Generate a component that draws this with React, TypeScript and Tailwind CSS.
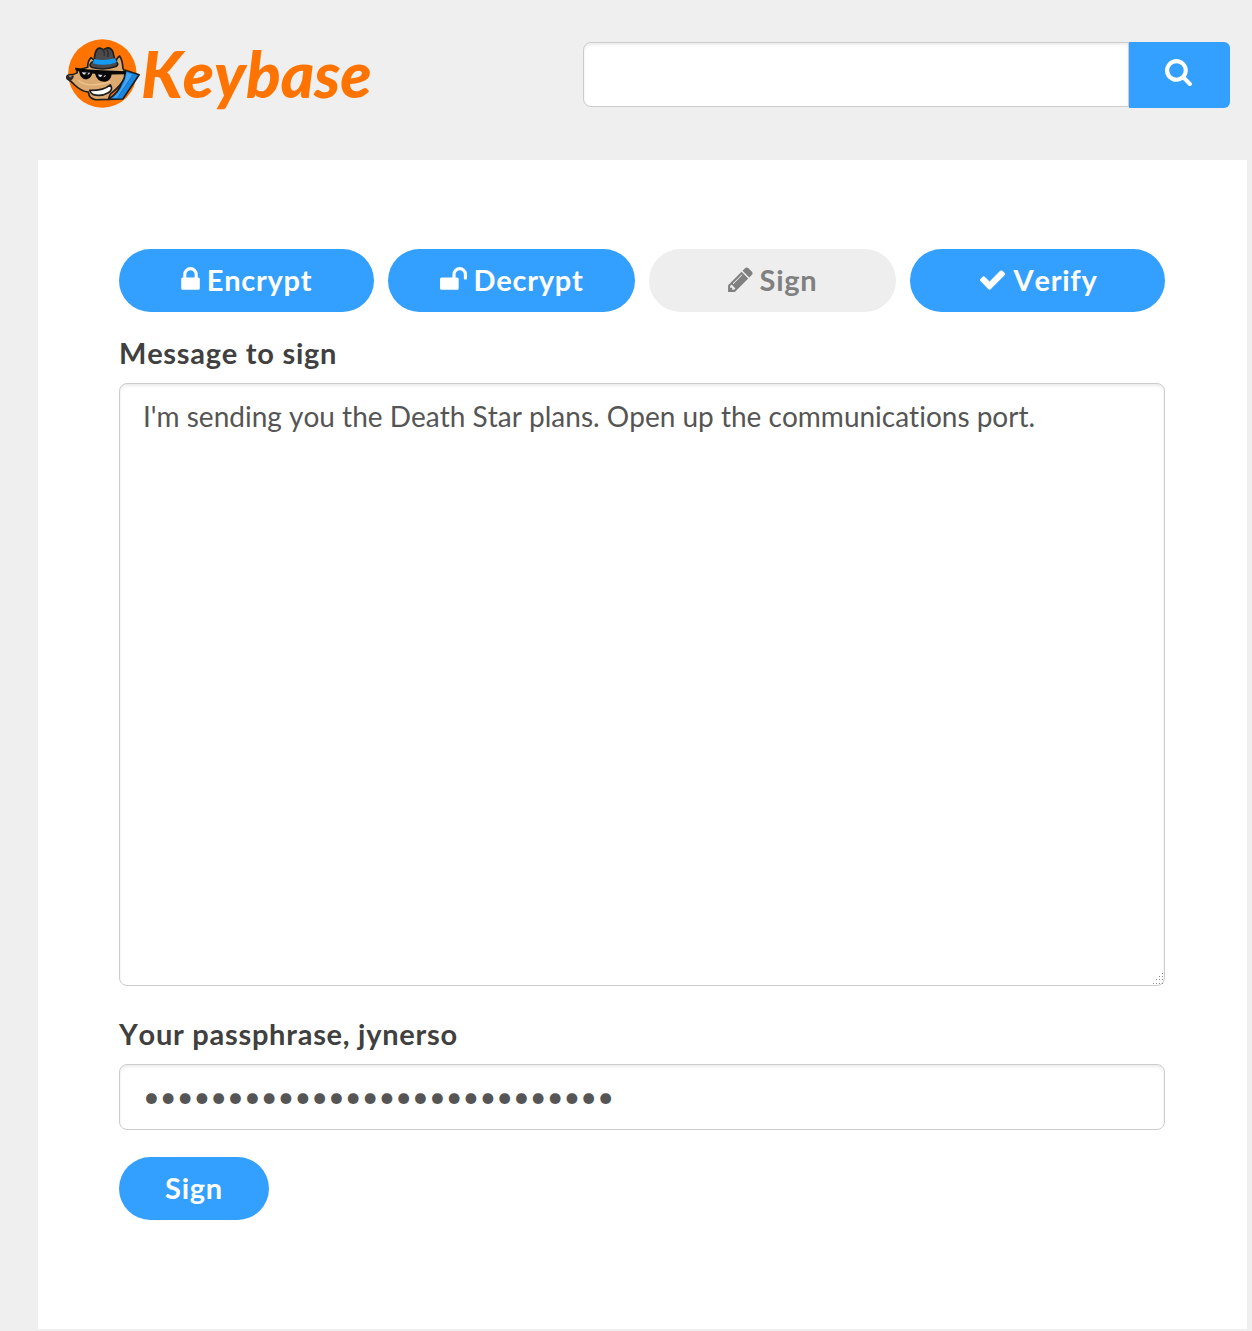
import React, { useState } from 'react';

const ICONS = {
  search:
    'M1216 832q0-185-131.5-316.5T768 384 451.5 515.5 320 832t131.5 316.5T768 1280t316.5-131.5T1216 832zm512 832q0 52-38 90t-90 38q-54 0-90-38l-343-342q-179 124-399 124-143 0-273.5-55.5t-225-150-150-225T64 832t55.5-273.5 150-225 225-150T768 128t273.5 55.5 225 150 150 225T1472 832q0 220-124 399l343 343q37 37 37 90z',
  lock: 'M640 768h512V576q0-106-75-181t-181-75-181 75-75 181v192zm832 96v576q0 40-28 68t-68 28H416q-40 0-68-28t-28-68V864q0-40 28-68t68-28h32V576q0-184 132-316t316-132 316 132 132 316v192h32q40 0 68 28t28 68z',
  unlock:
    'M1728 576v256q0 26-19 45t-45 19h-64q-26 0-45-19t-19-45V576q0-106-75-181t-181-75-181 75-75 181v192h96q40 0 68 28t28 68v576q0 40-28 68t-68 28H160q-40 0-68-28t-28-68V864q0-40 28-68t68-28h672V576q0-185 131.5-316.5T1280 128t316.5 131.5T1728 576z',
  pencil:
    'M491 1536l91-91-235-235-91 91v107h128v128h107zm523-928q0-22-22-22-10 0-17 7l-542 542q-7 7-7 17 0 22 22 22 10 0 17-7l542-542q7-7 7-17zm-54-192l416 416-832 832H128v-416zm683 96q0 53-37 90l-166 166-416-416 166-165q36-38 90-38 53 0 91 38l235 234q37 39 37 91z',
  check:
    'M1671 566q0 40-28 68l-724 724-136 136q-28 28-68 28t-68-28l-136-136-362-362q-28-28-28-68t28-68l136-136q28-28 68-28t68 28l294 295 656-657q28-28 68-28t68 28l136 136q28 28 28 68z',
};

type IconName = keyof typeof ICONS;

function Icon({ name, box = '0 0 1792 1792', className }: { name: IconName; box?: string; className: string }) {
  return (
    <svg viewBox={box} className={className} fill="currentColor" aria-hidden="true">
      <path d={ICONS[name]} />
    </svg>
  );
}

function Mascot() {
  return (
    <svg viewBox="30 28 228 208" className="h-[69px] w-[76px] shrink-0" aria-hidden="true">
      <circle cx="142" cy="132" r="103" fill="#ff7300" />
      <g stroke="#1d1d1d" strokeWidth="5" strokeLinejoin="round" strokeLinecap="round">
        <path d="M212 122 L253 136 L204 209 L160 210 Q192 190 200 160 Z" fill="#1787e4" />
        <path
          d="M66 122 L98 113 Q97 94 108 84 Q120 92 124 104 L182 100 Q184 86 194 79 Q203 92 204 116 Q213 128 208 146 Q200 168 166 194 L160 210 L122 211 Q102 208 100 188 Q78 186 58 166 Q48 155 36 148 Q32 138 42 136 Q56 136 66 130 Z"
          fill="#dcaa70"
        />
      </g>
      <path d="M216 129 L234 136 L188 204 L174 206 Q204 176 212 146Z" fill="#45a5f5" />
      <path d="M234 136 L188 204" stroke="#0d62b0" strokeWidth="2" />
      <path d="M34 141 Q40 134 56 138 Q56 149 46 153 Q34 150 34 141Z" fill="#302624" />
      <path d="M40 139 Q46 136 52 139 L45 144Z" fill="#a58b82" />
      <path d="M70 153 Q88 168 118 166 Q148 164 166 156" fill="none" stroke="#edc38f" strokeWidth="4" />
      <path
        d="M104 183 Q145 184 166 166 Q176 181 160 190 Q137 203 113 195 Q106 191 104 183Z"
        fill="#ffffff"
        stroke="#1d1d1d"
        strokeWidth="5"
        strokeLinejoin="round"
      />
      <path d="M60 114 Q90 120 140 122 L214 125 L213 134 L170 135 Q168 154 150 157 Q126 158 120 133 L112 132 Q107 148 93 150 Q75 148 72 126 L61 122Z" fill="#080808" />
      <path d="M80 128 L106 130 Q99 139 91 136 Q83 136 80 128Z M129 135 L153 137 Q149 146 141 142 Q132 145 129 135Z" fill="#dce5f5" />
      <path d="M94 128 L101 129 L96 138 L89 135Z M143 135 L150 137 L144 145 L138 142Z" fill="#111111" />
      <path
        d="M106 103 Q102 109 111 114 Q148 124 183 111 Q192 105 186 99 Q178 91 174 67 Q168 53 156 55 Q148 58 145 60 Q131 50 124 62 Q119 71 117 95 Q108 98 106 103Z"
        fill="#4b4b4d"
        stroke="#1d1d1d"
        strokeWidth="5"
        strokeLinejoin="round"
      />
      <path d="M117 88 Q147 95 180 86 L186 98 Q150 112 113 101Z" fill="#159af2" />
      <path d="M144 61 Q150 68 148 76 M155 60 Q163 69 158 80" fill="none" stroke="#303032" strokeWidth="5" strokeLinecap="round" />
    </svg>
  );
}

function ResizeGrip() {
  return (
    <svg viewBox="0 0 12 12" className="pointer-events-none absolute bottom-px right-px size-3" fill="#8a8a8a" aria-hidden="true">
      <path d="M10 0h1v1h-1zM7 3h1v1h-1zM10 3h1v1h-1zM4 6h1v1h-1zM7 6h1v1h-1zM10 6h1v1h-1zM1 10h1v1h-1zM4 10h1v1h-1zM7 10h1v1h-1zM10 10h1v1h-1z" />
    </svg>
  );
}

const tabs: { label: string; icon: IconName; box: string; size: string }[] = [
  { label: 'Encrypt', icon: 'lock', box: '320 0 1152 1792', size: 'h-[29px] w-[19px]' },
  { label: 'Decrypt', icon: 'unlock', box: '64 0 1664 1792', size: 'h-[29px] w-[27px]' },
  { label: 'Sign', icon: 'pencil', box: '128 0 1536 1792', size: 'h-[29px] w-[25px]' },
  { label: 'Verify', icon: 'check', box: '0 0 1792 1792', size: 'h-[29px] w-[29px]' },
];

const field =
  'block w-full rounded-lg border border-[#cccccc] bg-white px-[23px] leading-10 text-[#555555] shadow-[inset_0_2px_3px_rgba(0,0,0,0.08)] outline-none';

export default function App() {
  const [active, setActive] = useState('Sign');
  return (
    <div className="min-h-screen bg-[#efefef] pb-0.5 pl-[38px] pr-[5px] font-['Lato',sans-serif] [font-kerning:none] [font-variant-ligatures:none]">
      <header className="flex h-40 items-start justify-between pl-[27px] pr-[17px]">
        <a href="#" className="mt-[39px] flex items-center text-[#ff7300]">
          <Mascot />
          <span className="text-[64px] font-black italic leading-[69px]">Keybase</span>
        </a>
        <form className="mt-[42px] flex w-[56%] max-w-[647px] items-start" onSubmit={(e) => e.preventDefault()}>
          <input
            type="search"
            aria-label="Search"
            className="h-[65px] min-w-0 flex-1 rounded-l-lg border border-[#cccccc] bg-white px-6 text-[29px] text-[#555555] shadow-[inset_0_2px_3px_rgba(0,0,0,0.08)] outline-none"
          />
          <button type="submit" aria-label="Search" className="flex h-[66px] w-[101px] justify-center rounded-r-md bg-[#339fff] pr-0.5 pt-[15px] text-white">
            <Icon name="search" className="size-[29px]" />
          </button>
        </form>
      </header>
      <main className="min-h-[1169px] bg-white pl-[81px] pr-[82px] pt-[89px]">
        <nav className="grid grid-cols-[255fr_247fr_247fr_255fr] gap-3.5">
          {tabs.map((t) => (
            <button
              key={t.label}
              type="button"
              aria-pressed={active === t.label}
              onClick={() => setActive(t.label)}
              className={
                'flex h-[63px] items-center justify-center gap-[7px] rounded-full pb-0.5 text-[29px] font-bold tracking-wide ' +
                (active === t.label ? 'bg-[#eeeeee] text-[#808080]' : 'bg-[#339fff] text-white')
              }
            >
              <Icon name={t.icon} box={t.box} className={t.size} />
              {t.label}
            </button>
          ))}
        </nav>
        <form onSubmit={(e) => e.preventDefault()}>
          <label htmlFor="message" className="mt-[21px] block text-[29px] font-bold leading-10 tracking-wide text-[#404040]">
            Message to sign
          </label>
          <div className="relative mt-2.5">
            <textarea
              id="message"
              className={field + ' h-[603px] resize-none py-3 text-[28px]'}
              defaultValue="I'm sending you the Death Star plans. Open up the communications port."
            />
            <ResizeGrip />
          </div>
          <label htmlFor="passphrase" className="mt-7 block text-[29px] font-bold leading-10 tracking-wide text-[#404040]">
            Your passphrase, jynerso
          </label>
          <input
            id="passphrase"
            type="password"
            className={field + ' mt-2.5 h-[66px] pb-1 text-[29px]'}
            defaultValue="abcdefghijklmnopqrstuvwxyzab"
          />
          <button type="submit" className="mt-[27px] h-[63px] w-[150px] rounded-full bg-[#339fff] pb-0.5 text-[29px] font-bold tracking-wide text-white">
            Sign
          </button>
        </form>
      </main>
    </div>
  );
}
